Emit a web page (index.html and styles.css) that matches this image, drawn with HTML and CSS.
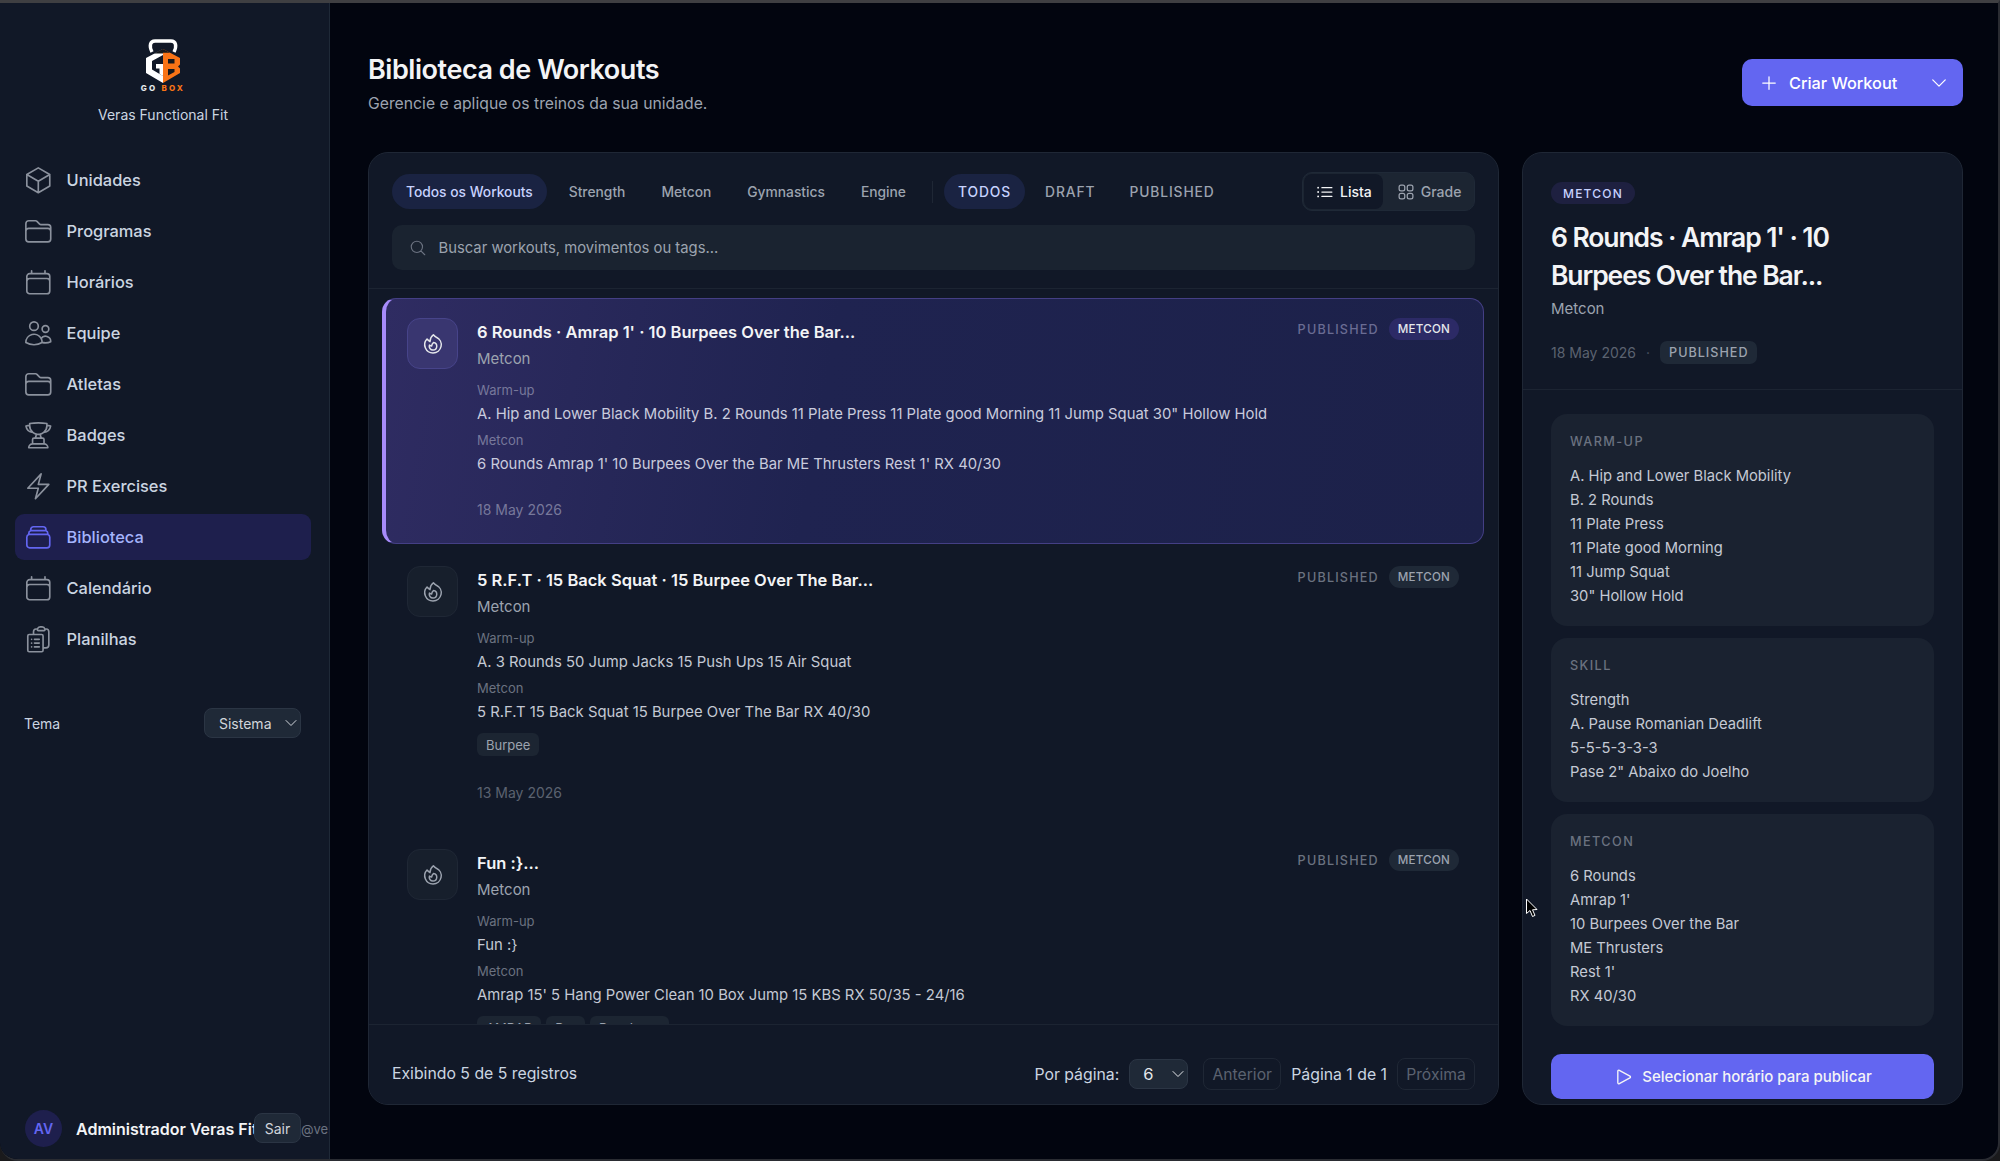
FILE: index.html
```html
<!DOCTYPE html>
<html lang="pt-BR">
<head>
<meta charset="utf-8">
<title>Biblioteca de Workouts</title>
<link rel="stylesheet" href="styles.css">
</head>
<body>
<svg class="sprite" aria-hidden="true">
  <defs>
    <symbol id="i-cube" viewBox="0 0 24 24"><path d="m21 7.5-9-5.25L3 7.5m18 0-9 5.25m9-5.25v9l-9 5.25M3 7.5l9 5.25M3 7.5v9l9 5.25m0-9v9"/></symbol>
    <symbol id="i-folder" viewBox="0 0 24 24"><path d="M2.25 12.75V12A2.25 2.25 0 0 1 4.5 9.75h15A2.25 2.25 0 0 1 21.75 12v.75m-8.69-6.44-2.12-2.12a1.5 1.5 0 0 0-1.061-.44H4.5A2.25 2.25 0 0 0 2.25 6v12a2.25 2.25 0 0 0 2.25 2.25h15A2.25 2.25 0 0 0 21.75 18V9a2.25 2.25 0 0 0-2.25-2.25h-5.379a1.5 1.5 0 0 1-1.06-.44Z"/></symbol>
    <symbol id="i-calendar" viewBox="0 0 24 24"><path d="M6.75 3v2.25M17.25 3v2.25M3 18.75V7.5a2.25 2.25 0 0 1 2.25-2.25h13.5A2.25 2.25 0 0 1 21 7.5v11.25m-18 0A2.25 2.25 0 0 0 5.25 21h13.5A2.25 2.25 0 0 0 21 18.75m-18 0v-7.5A2.25 2.25 0 0 1 5.25 9h13.5A2.25 2.25 0 0 1 21 11.25v7.5"/></symbol>
    <symbol id="i-users" viewBox="0 0 24 24"><path d="M15 19.128a9.38 9.38 0 0 0 2.625.372 9.337 9.337 0 0 0 4.121-.952 4.125 4.125 0 0 0-7.533-2.493M15 19.128v-.003c0-1.113-.285-2.16-.786-3.07M15 19.128v.106A12.318 12.318 0 0 1 8.624 21c-2.331 0-4.512-.645-6.374-1.766l-.001-.109a6.375 6.375 0 0 1 11.964-3.07M12 6.375a3.375 3.375 0 1 1-6.75 0 3.375 3.375 0 0 1 6.75 0Zm8.25 2.25a2.625 2.625 0 1 1-5.25 0 2.625 2.625 0 0 1 5.25 0Z"/></symbol>
    <symbol id="i-trophy" viewBox="0 0 24 24"><path d="M16.5 18.75h-9m9 0a3 3 0 0 1 3 3h-15a3 3 0 0 1 3-3m9 0v-3.375c0-.621-.503-1.125-1.125-1.125h-.871M7.5 18.75v-3.375c0-.621.504-1.125 1.125-1.125h.872m5.007 0H9.497m5.007 0a7.454 7.454 0 0 1-.982-3.172M9.497 14.25a7.454 7.454 0 0 0 .981-3.172M5.25 4.236c-.982.143-1.954.317-2.916.52A6.003 6.003 0 0 0 7.73 9.728M5.25 4.236V4.5c0 2.108.966 3.99 2.48 5.228M5.25 4.236V2.721C7.456 2.41 9.71 2.25 12 2.25c2.291 0 4.545.16 6.75.47v1.516M7.73 9.728a6.726 6.726 0 0 0 2.748 1.35m8.272-6.842V4.5c0 2.108-.966 3.99-2.48 5.228m2.48-5.492a46.32 46.32 0 0 1 2.916.52 6.003 6.003 0 0 1-5.395 4.972m0 0a6.726 6.726 0 0 1-2.749 1.35m0 0a6.772 6.772 0 0 1-3.044 0"/></symbol>
    <symbol id="i-bolt" viewBox="0 0 24 24"><path d="m3.75 13.5 10.5-11.25L12 10.5h8.25L9.75 21.75 12 13.5H3.75Z"/></symbol>
    <symbol id="i-stack" viewBox="0 0 24 24"><path d="M6 6.878V6a2.25 2.25 0 0 1 2.25-2.25h7.5A2.25 2.25 0 0 1 18 6v.878m-12 0c.235-.083.487-.128.75-.128h10.5c.263 0 .515.045.75.128m-12 0A2.25 2.25 0 0 0 4.5 9v.878m13.5-3A2.25 2.25 0 0 1 19.5 9v.878m0 0a2.246 2.246 0 0 0-.75-.128H5.25c-.263 0-.515.045-.75.128m15 0A2.25 2.25 0 0 1 21 12v6a2.25 2.25 0 0 1-2.25 2.25H5.25A2.25 2.25 0 0 1 3 18v-6c0-.98.626-1.813 1.5-2.122"/></symbol>
    <symbol id="i-clipboard" viewBox="0 0 24 24"><path d="M9 12h3.75M9 15h3.75M9 18h3.75m3 .75H18a2.25 2.25 0 0 0 2.25-2.25V6.108c0-1.135-.845-2.098-1.976-2.192a48.424 48.424 0 0 0-1.123-.08m-5.801 0c-.065.21-.1.433-.1.664 0 .414.336.75.75.75h4.5a.75.75 0 0 0 .75-.75 2.25 2.25 0 0 0-.1-.664m-5.8 0A2.251 2.251 0 0 1 13.5 2.25H15c1.012 0 1.867.668 2.15 1.586m-5.8 0c-.376.023-.75.05-1.124.08C9.095 4.01 8.25 4.973 8.25 6.108V8.25m0 0H4.875c-.621 0-1.125.504-1.125 1.125v11.25c0 .621.504 1.125 1.125 1.125h9.75c.621 0 1.125-.504 1.125-1.125V9.375c0-.621-.504-1.125-1.125-1.125H8.25ZM6.75 12h.008v.008H6.75V12Zm0 3h.008v.008H6.75V15Zm0 3h.008v.008H6.75V18Z"/></symbol>
    <symbol id="i-fire" viewBox="0 0 24 24"><path d="M15.362 5.214A8.252 8.252 0 0 1 12 21 8.25 8.25 0 0 1 6.038 7.047 8.287 8.287 0 0 0 9 9.601a8.983 8.983 0 0 1 3.361-6.867 8.21 8.21 0 0 0 3 2.48Z"/><path d="M12 18a3.75 3.75 0 0 0 .495-7.468 5.99 5.99 0 0 0-1.925 3.547 5.975 5.975 0 0 1-2.133-1.001A3.75 3.75 0 0 0 12 18Z"/></symbol>
    <symbol id="i-list" viewBox="0 0 24 24"><path d="M8.25 6.75h12M8.25 12h12m-12 5.25h12M3.75 6.75h.007v.008H3.75V6.75Zm.375 0a.375.375 0 1 1-.75 0 .375.375 0 0 1 .75 0ZM3.75 12h.007v.008H3.75V12Zm.375 0a.375.375 0 1 1-.75 0 .375.375 0 0 1 .75 0Zm-.375 5.25h.007v.008H3.75v-.008Zm.375 0a.375.375 0 1 1-.75 0 .375.375 0 0 1 .75 0Z"/></symbol>
    <symbol id="i-grid" viewBox="0 0 24 24"><path d="M3.75 6A2.25 2.25 0 0 1 6 3.75h2.25A2.25 2.25 0 0 1 10.5 6v2.25a2.25 2.25 0 0 1-2.25 2.25H6a2.25 2.25 0 0 1-2.25-2.25V6ZM3.75 15.75A2.25 2.25 0 0 1 6 13.5h2.25a2.25 2.25 0 0 1 2.25 2.25V18a2.25 2.25 0 0 1-2.25 2.25H6A2.25 2.25 0 0 1 3.75 18v-2.25ZM13.5 6a2.25 2.25 0 0 1 2.25-2.25H18A2.25 2.25 0 0 1 20.25 6v2.25A2.25 2.25 0 0 1 18 10.5h-2.25a2.25 2.25 0 0 1-2.25-2.25V6ZM13.5 15.75a2.25 2.25 0 0 1 2.25-2.25H18a2.25 2.25 0 0 1 2.25 2.25V18A2.25 2.25 0 0 1 18 20.25h-2.25A2.25 2.25 0 0 1 13.5 18v-2.25Z"/></symbol>
    <symbol id="i-search" viewBox="0 0 24 24"><path d="m21 21-5.197-5.197m0 0A7.5 7.5 0 1 0 5.196 5.196a7.5 7.5 0 0 0 10.607 10.607Z"/></symbol>
    <symbol id="i-plus" viewBox="0 0 24 24"><path d="M12 4.5v15m7.5-7.5h-15"/></symbol>
    <symbol id="i-chevron" viewBox="0 0 24 24"><path d="m19.5 8.25-7.5 7.5-7.5-7.5"/></symbol>
    <symbol id="i-play" viewBox="0 0 24 24"><path d="M5.25 5.653c0-.856.917-1.398 1.667-.986l11.54 6.347a1.125 1.125 0 0 1 0 1.972l-11.54 6.347a1.125 1.125 0 0 1-1.667-.986V5.653Z"/></symbol>
  </defs>
</svg>

<div class="window">
  <aside class="sidebar">
    <div class="brand">
      <svg class="logo" viewBox="0 0 44 46" aria-hidden="true">
        <path class="logo-handle" d="M11 14 C8 8 9 3 14 3 H30 C35 3 36 8 33 14"/>
        <path class="logo-white" d="M22 11 L5 20 V35 L22 45 V38 L11 31.5 V23 L22 17Z"/>
        <path class="logo-white" d="M15 26 H22 V38 L18.5 36 V30.5 H15Z"/>
        <path class="logo-dark" d="M22 11 L13 15.5 H31Z"/>
        <path class="logo-orange" d="M22 11 L39 20 V26.5 L37 28.5 L39 30.5 V35 L22 45Z"/>
        <path class="logo-dark" d="M22 11 L15 14.7 H29Z"/>
        <path class="logo-dark" d="M27 21 H33.5 V25.5 H27Z M27 31 H33.5 V34 L27 37.5Z"/>
      </svg>
      <div class="logo-word">GO <span class="logo-word-accent">BOX</span></div>
      <div class="brand-name">Veras Functional Fit</div>
    </div>
    <nav class="nav">
      <a class="nav-item"><svg class="icon nav-icon"><use href="#i-cube"/></svg>Unidades</a>
      <a class="nav-item"><svg class="icon nav-icon"><use href="#i-folder"/></svg>Programas</a>
      <a class="nav-item"><svg class="icon nav-icon"><use href="#i-calendar"/></svg>Horários</a>
      <a class="nav-item"><svg class="icon nav-icon"><use href="#i-users"/></svg>Equipe</a>
      <a class="nav-item"><svg class="icon nav-icon"><use href="#i-folder"/></svg>Atletas</a>
      <a class="nav-item"><svg class="icon nav-icon"><use href="#i-trophy"/></svg>Badges</a>
      <a class="nav-item"><svg class="icon nav-icon"><use href="#i-bolt"/></svg>PR Exercises</a>
      <a class="nav-item is-active"><svg class="icon nav-icon"><use href="#i-stack"/></svg>Biblioteca</a>
      <a class="nav-item"><svg class="icon nav-icon"><use href="#i-calendar"/></svg>Calendário</a>
      <a class="nav-item"><svg class="icon nav-icon"><use href="#i-clipboard"/></svg>Planilhas</a>
    </nav>
    <div class="theme-row">
      <span class="theme-label">Tema</span>
      <div class="theme-select"><span>Sistema</span><svg class="icon select-chevron"><use href="#i-chevron"/></svg></div>
    </div>
    <div class="user-row">
      <div class="avatar">AV</div>
      <span class="user-name">Administrador Veras Fit</span>
      <span class="user-handle">@veras</span>
      <button class="logout">Sair</button>
    </div>
  </aside>

  <main class="main">
    <header class="page-head">
      <div>
        <h1 class="page-title">Biblioteca de Workouts</h1>
        <p class="page-sub">Gerencie e aplique os treinos da sua unidade.</p>
      </div>
      <button class="btn-create">
        <svg class="icon"><use href="#i-plus"/></svg>
        <span class="btn-create-label">Criar Workout</span>
        <svg class="icon"><use href="#i-chevron"/></svg>
      </button>
    </header>

    <div class="columns">
      <section class="panel list-panel">
        <div class="toolbar">
          <div class="filters">
            <span class="pill is-on">Todos os Workouts</span>
            <span class="pill">Strength</span>
            <span class="pill">Metcon</span>
            <span class="pill">Gymnastics</span>
            <span class="pill">Engine</span>
            <span class="filter-sep"></span>
            <span class="pill pill-status is-on">TODOS</span>
            <span class="pill pill-status">DRAFT</span>
            <span class="pill pill-status">PUBLISHED</span>
            <div class="view-toggle">
              <span class="view-opt is-on"><svg class="icon"><use href="#i-list"/></svg>Lista</span>
              <span class="view-opt"><svg class="icon"><use href="#i-grid"/></svg>Grade</span>
            </div>
          </div>
          <div class="search">
            <svg class="icon search-icon"><use href="#i-search"/></svg>
            <span>Buscar workouts, movimentos ou tags...</span>
          </div>
        </div>

        <div class="list">
          <article class="card is-selected">
            <div class="card-icon"><svg class="icon fire-icon"><use href="#i-fire"/></svg></div>
            <div class="card-body">
              <h3 class="card-title">6 Rounds · Amrap 1' · 10 Burpees Over the Bar...</h3>
              <div class="card-sub">Metcon</div>
              <div class="card-label">Warm-up</div>
              <div class="card-line">A. Hip and Lower Black Mobility B. 2 Rounds 11 Plate Press 11 Plate good Morning 11 Jump Squat 30" Hollow Hold</div>
              <div class="card-label">Metcon</div>
              <div class="card-line">6 Rounds Amrap 1' 10 Burpees Over the Bar ME Thrusters Rest 1' RX 40/30</div>
              <div class="card-date">18 May 2026</div>
            </div>
            <div class="card-meta"><span class="card-status">PUBLISHED</span><span class="card-badge">METCON</span></div>
          </article>

          <article class="card">
            <div class="card-icon"><svg class="icon fire-icon"><use href="#i-fire"/></svg></div>
            <div class="card-body">
              <h3 class="card-title">5 R.F.T · 15 Back Squat · 15 Burpee Over The Bar...</h3>
              <div class="card-sub">Metcon</div>
              <div class="card-label">Warm-up</div>
              <div class="card-line">A. 3 Rounds 50 Jump Jacks 15 Push Ups 15 Air Squat</div>
              <div class="card-label">Metcon</div>
              <div class="card-line">5 R.F.T 15 Back Squat 15 Burpee Over The Bar RX 40/30</div>
              <div class="tags"><span class="tag">Burpee</span></div>
              <div class="card-date">13 May 2026</div>
            </div>
            <div class="card-meta"><span class="card-status">PUBLISHED</span><span class="card-badge">METCON</span></div>
          </article>

          <article class="card">
            <div class="card-icon"><svg class="icon fire-icon"><use href="#i-fire"/></svg></div>
            <div class="card-body">
              <h3 class="card-title">Fun :}...</h3>
              <div class="card-sub">Metcon</div>
              <div class="card-label">Warm-up</div>
              <div class="card-line">Fun :}</div>
              <div class="card-label">Metcon</div>
              <div class="card-line">Amrap 15' 5 Hang Power Clean 10 Box Jump 15 KBS RX 50/35 - 24/16</div>
              <div class="tags"><span class="tag">AMRAP</span><span class="tag">Bar</span><span class="tag">Box Jump</span></div>
            </div>
            <div class="card-meta"><span class="card-status">PUBLISHED</span><span class="card-badge">METCON</span></div>
          </article>
        </div>

        <footer class="list-foot">
          <span class="foot-count">Exibindo 5 de 5 registros</span>
          <div class="pager">
            <span class="pager-label">Por página:</span>
            <div class="pager-select"><span>6</span><svg class="icon select-chevron"><use href="#i-chevron"/></svg></div>
            <button class="pager-btn">Anterior</button>
            <span class="pager-page">Página 1 de 1</span>
            <button class="pager-btn">Próxima</button>
          </div>
        </footer>
      </section>

      <aside class="panel detail-panel">
        <div class="detail-head">
          <span class="detail-badge">METCON</span>
          <h2 class="detail-title">6 Rounds · Amrap 1' · 10 Burpees Over the Bar...</h2>
          <div class="detail-sub">Metcon</div>
          <div class="detail-meta">
            <span class="detail-date">18 May 2026</span>
            <span class="detail-dot">·</span>
            <span class="detail-status">PUBLISHED</span>
          </div>
        </div>
        <div class="detail-body">
          <div class="block">
            <div class="block-label">WARM-UP</div>
            <div class="block-line">A. Hip and Lower Black Mobility</div>
            <div class="block-line">B. 2 Rounds</div>
            <div class="block-line">11 Plate Press</div>
            <div class="block-line">11 Plate good Morning</div>
            <div class="block-line">11 Jump Squat</div>
            <div class="block-line">30" Hollow Hold</div>
          </div>
          <div class="block">
            <div class="block-label">SKILL</div>
            <div class="block-line">Strength</div>
            <div class="block-line">A. Pause Romanian Deadlift</div>
            <div class="block-line">5-5-5-3-3-3</div>
            <div class="block-line">Pase 2" Abaixo do Joelho</div>
          </div>
          <div class="block">
            <div class="block-label">METCON</div>
            <div class="block-line">6 Rounds</div>
            <div class="block-line">Amrap 1'</div>
            <div class="block-line">10 Burpees Over the Bar</div>
            <div class="block-line">ME Thrusters</div>
            <div class="block-line">Rest 1'</div>
            <div class="block-line">RX 40/30</div>
          </div>
        </div>
        <div class="detail-foot">
          <button class="btn-publish"><svg class="icon btn-publish-icon"><use href="#i-play"/></svg>Selecionar horário para publicar</button>
        </div>
      </aside>
    </div>
  </main>

  <svg class="cursor" viewBox="0 0 14 20" aria-hidden="true"><path d="M1.5 1 V15.5 L5 12.5 L7.5 18.5 L10 17.4 L7.5 11.8 L12 11.5 Z"/></svg>
</div>
</body>
</html>
```

FILE: styles.css
```css
* { box-sizing: border-box; }
html, body { margin: 0; height: 100%; }
body {
  background: #1a1a1c;
  color: #e5e7eb;
  font-family: Inter, "Noto Sans", sans-serif;
  overflow: hidden;
}
h1, h2, h3, p { margin: 0; }
button { font-family: inherit; border: 0; cursor: pointer; }
.sprite { display: none; }

.icon {
  display: block;
  width: 20px;
  height: 20px;
  fill: none;
  stroke: currentColor;
  stroke-width: 1.5;
  stroke-linecap: round;
  stroke-linejoin: round;
  flex: none;
}

.window {
  position: relative;
  display: flex;
  height: 1161px;
  width: 2000px;
  border-top: 3px solid #3f3f42;
  border-right: 2px solid #2a2c32;
  border-bottom: 2px solid #2a2c32;
  border-radius: 0 0 18px 18px;
  background: #02050f;
  overflow: hidden;
}

/* Sidebar */
.sidebar {
  width: 330px;
  flex: none;
  display: flex;
  flex-direction: column;
  background: #111827;
  border-right: 1px solid #1f2937;
}
.brand {
  display: flex;
  flex-direction: column;
  align-items: center;
  padding: 35px 3px 0 0;
}
.logo { width: 44px; height: 46px; display: block; }
.logo-handle { fill: none; stroke: #fff; stroke-width: 3.4; }
.logo-white { fill: #fff; }
.logo-orange { fill: #f97316; }
.logo-dark { fill: #16181d; }
.logo-word {
  font-size: 8px;
  font-weight: 800;
  letter-spacing: 2.2px;
  line-height: 10px;
  margin-top: -1px;
  color: #e5e7eb;
  white-space: pre;
}
.logo-word-accent { color: #f97316; }
.brand-name {
  font-size: 14px;
  line-height: 20px;
  margin-top: 12px;
  color: #cbd5e1;
}

.nav {
  display: flex;
  flex-direction: column;
  gap: 5px;
  padding: 0 18px 0 15px;
  margin-top: 32px;
}
.nav-item {
  display: flex;
  align-items: center;
  gap: 13px;
  height: 46px;
  padding-left: 8px;
  border-radius: 9px;
  font-size: 16.4px;
  font-weight: 500;
  color: #cbd5e1;
}
.nav-icon { width: 30.6px; height: 30.6px; color: #8b919d; stroke-width: 1.3; }
.nav-item.is-active { background: #1e1f4d; color: #a5b4fc; }
.nav-item.is-active .nav-icon { color: #6366f1; }

.theme-row {
  display: flex;
  align-items: center;
  justify-content: space-between;
  padding: 0 28px 0 24px;
  margin-top: 46px;
}
.theme-label { font-size: 14px; color: #cbd5e1; }
.theme-select {
  display: flex;
  align-items: center;
  justify-content: space-between;
  width: 97px;
  height: 30px;
  padding: 0 1px 0 14px;
  background: #1f2937;
  border: 1px solid #2b3544;
  border-radius: 8px;
  font-size: 14px;
  color: #d1d5db;
}
.select-chevron { width: 16px; height: 16px; }

.user-row {
  position: relative;
  margin-top: auto;
  display: flex;
  align-items: center;
  gap: 14px;
  height: 37px;
  margin-bottom: 12px;
  padding-left: 25px;
  overflow: hidden;
  white-space: nowrap;
}
.avatar {
  width: 37px;
  height: 37px;
  border-radius: 50%;
  flex: none;
  display: flex;
  align-items: center;
  justify-content: center;
  background: #1e1f4d;
  color: #6366f1;
  font-size: 14px;
  font-weight: 600;
}
.user-name { font-size: 16px; font-weight: 600; color: #f3f4f6; }
.user-handle { font-size: 13px; color: #6b7280; position: absolute; left: 301px; }
.logout {
  position: absolute;
  left: 254px;
  top: 3px;
  width: 47px;
  height: 30px;
  background: #1f2937;
  border: 1px solid #2b3544;
  border-radius: 8px;
  color: #d1d5db;
  font-size: 14px;
}

/* Main */
.main {
  flex: 1;
  min-width: 0;
  display: flex;
  flex-direction: column;
  padding: 0 35px 54px 38px;
}
.page-head {
  height: 149px;
  flex: none;
  display: flex;
  justify-content: space-between;
  align-items: flex-start;
  padding-top: 56px;
}
.page-title { font-size: 27px; font-weight: 600; line-height: 24px; margin-top: -1px; color: #f3f4f6; letter-spacing: -0.45px; }
.page-sub { font-size: 15.75px; line-height: 22px; margin-top: 11px; color: #9ca3af; }
.btn-create {
  display: flex;
  align-items: center;
  gap: 10px;
  width: 221px;
  height: 47px;
  padding: 0 14px 0 17px;
  background: #6366f1;
  color: #fff;
  border-radius: 10px;
  font-size: 16.3px;
  font-weight: 500;
}
.btn-create-label { flex: 1; text-align: left; }

.columns { flex: 1; min-height: 0; display: flex; gap: 23px; }
.panel {
  background: #111827;
  border: 1px solid #1f2735;
  border-radius: 20px;
  overflow: hidden;
  display: flex;
  flex-direction: column;
}
.list-panel { width: 1131px; flex: none; }
.detail-panel { flex: 1; min-width: 0; }

/* Toolbar */
.toolbar { padding: 19px 23px 18px; border-bottom: 1px solid #1c2432; flex: none; }
.filters { display: flex; align-items: center; gap: 8px; height: 39px; }
.pill {
  display: flex;
  align-items: center;
  height: 35px;
  padding: 0 14px;
  border-radius: 18px;
  font-size: 13.8px;
  font-weight: 500;
  color: #9ca3af;
  white-space: nowrap;
}
.pill.is-on { background: #1a2342; color: #c7d2fe; }
.pill-status { letter-spacing: 0.9px; }
.pill-status + .pill-status { margin-left: -2px; }
.filter-sep { width: 1px; height: 22px; background: #1f2735; margin: 0 3px 0 4px; }
.view-toggle {
  margin-left: auto;
  width: 173px;
  height: 39px;
  display: flex;
  align-items: center;
  padding: 1px;
  border-radius: 10px;
  background: #1c2532;
  border: 1px solid #1f2937;
}
.view-opt {
  display: flex;
  align-items: center;
  gap: 5px;
  height: 35px;
  padding: 0 11px;
  border-radius: 8px;
  font-size: 14px;
  font-weight: 500;
  color: #9ca3af;
}
.view-opt.is-on { background: #111827; color: #f3f4f6; margin-right: 2px; }
.search {
  display: flex;
  align-items: center;
  gap: 12px;
  height: 45px;
  margin-top: 14px;
  padding-left: 16.5px;
  background: #1a2330;
  border-radius: 10px;
  font-size: 14.8px;
  color: #9ca3af;
}
.search-icon { width: 18px; height: 18px; color: #6b7280; }

/* List */
.list {
  flex: 1;
  min-height: 0;
  overflow: hidden;
  display: flex;
  flex-direction: column;
  gap: 2px;
  padding: 9px 14px 0 13px;
}
.card {
  display: flex;
  flex: none;
  align-items: flex-start;
  border: 1px solid transparent;
  border-left-width: 4px;
  border-radius: 14px;
  padding: 19px 24px 23px 21px;
}
.card.is-selected {
  background: linear-gradient(100deg, #2f2c62 0%, #1f2350 40%, #1c2149 100%);
  border-color: #443f85;
  border-left-color: #a78bfa;
}
.card-icon {
  width: 51px;
  height: 51px;
  flex: none;
  display: flex;
  align-items: center;
  justify-content: center;
  border: 1px solid #1f2735;
  border-radius: 13px;
  background: #171f2c;
  color: #9ca3af;
}
.fire-icon { width: 24px; height: 24px; }
.is-selected .card-icon { background: #393670; border-color: #47448a; color: #e5e7eb; }
.card-body { flex: 1; min-width: 0; margin-left: 19px; }
.card-title { font-size: 16.5px; font-weight: 600; line-height: 28px; color: #f3f4f6; }
.card-sub { font-size: 15px; line-height: 22px; margin: 2px 0 11px; color: #9ca3af; }
.card-label { font-size: 13px; line-height: 18px; color: #6b7280; }
.card-line { font-size: 14.85px; line-height: 24px; margin: 3px 0 5px; color: #c4c9d4; }
.is-selected .card-line { color: #c9cbdd; }
.is-selected .card-label, .is-selected .card-date { color: #77789b; }
.card-date { font-size: 14px; line-height: 20px; margin-top: 24px; color: #5b6270; }
.tags { display: flex; gap: 5px; margin-top: 9px; }
.tags + .card-date { margin-top: 27px; }
.tag {
  height: 23px;
  padding: 0 9px;
  display: flex;
  align-items: center;
  background: #1c2532;
  border-radius: 6px;
  font-size: 13px;
  color: #9ca3af;
}
.card-meta { display: flex; align-items: center; gap: 10px; flex: none; height: 22px; }
.card-status { font-size: 12.6px; font-weight: 500; letter-spacing: 1.2px; color: #6b7280; }
.card-badge {
  height: 22px;
  padding: 0 9px;
  display: flex;
  align-items: center;
  border-radius: 11px;
  background: #1f2937;
  color: #9ca3af;
  font-size: 11.6px;
  font-weight: 500;
  letter-spacing: 0.2px;
}
.is-selected .card-badge { background: #2c2a66; color: #e5e7eb; }
.is-selected .card-status { color: #6a6c93; }

/* Footer */
.list-foot {
  height: 80px;
  flex: none;
  display: flex;
  align-items: flex-end;
  justify-content: space-between;
  padding: 0 23px 14px;
  border-top: 1px solid #1c2432;
  background: #111827;
  font-size: 15.8px;
  color: #cbd5e1;
}
.foot-count { line-height: 32px; }
.pager { display: flex; align-items: center; height: 32px; }
.pager-label { margin-right: 10px; }
.pager-select {
  display: flex;
  align-items: center;
  justify-content: space-between;
  width: 59px;
  height: 30px;
  padding: 0 1px 0 13px;
  background: #1f2937;
  border: 1px solid #2b3544;
  border-radius: 8px;
  color: #e5e7eb;
  font-size: 16.5px;
}
.pager-btn {
  height: 32px;
  width: 78px;
  background: transparent;
  border: 1px solid #1f2735;
  border-radius: 8px;
  font-size: 15.7px;
  color: #5b6270;
  padding: 0;
}
.pager-select + .pager-btn { margin-left: 15px; }
.pager-page { margin: 0 10px; }

/* Detail */
.detail-head { padding: 29px 28px 25px; border-bottom: 1px solid #1c2432; flex: none; }
.detail-badge {
  display: inline-flex;
  align-items: center;
  height: 22px;
  padding: 0 12px;
  border-radius: 11px;
  background: #1e2040;
  color: #c7d2fe;
  font-size: 12px;
  font-weight: 500;
  letter-spacing: 1.2px;
  vertical-align: top;
}
.detail-title {
  font-size: 26.5px;
  line-height: 38px;
  font-weight: 600;
  letter-spacing: -1.1px;
  margin-top: 14px;
  color: #f3f4f6;
  max-width: 300px;
}
.detail-sub { font-size: 15px; line-height: 22px; margin-top: 4px; color: #9ca3af; }
.detail-meta { display: flex; align-items: center; margin-top: 21px; }
.detail-date { font-size: 14px; color: #5b6270; }
.detail-dot { margin: 0 10px; color: #4b5563; font-size: 14px; }
.detail-status {
  height: 23px;
  padding: 0 9px;
  display: flex;
  align-items: center;
  border-radius: 7px;
  background: #1f2937;
  color: #9ca3af;
  font-size: 12.6px;
  font-weight: 500;
  letter-spacing: 1px;
}
.detail-body { flex: 1; min-height: 0; overflow: hidden; padding: 24px 28px 0; display: flex; flex-direction: column; gap: 12px; }
.block { background: #1a2230; border-radius: 16px; padding: 18px 19px 18px; flex: none; }
.block-label { font-size: 12.7px; line-height: 20px; font-weight: 500; letter-spacing: 1.4px; color: #6b7280; margin-bottom: 12px; }
.block-line { font-size: 14.75px; line-height: 24px; color: #c4c9d4; }
.detail-foot { padding: 0 28px 5px; flex: none; }
.btn-publish {
  width: 100%;
  height: 45px;
  display: flex;
  align-items: center;
  justify-content: center;
  gap: 7px;
  background: #6366f1;
  color: #f3f4f6;
  border-radius: 10px;
  font-size: 15px;
  font-weight: 500;
}
.btn-publish-icon { width: 22px; height: 22px; }

.cursor {
  position: absolute;
  left: 1525px;
  top: 895px;
  width: 14px;
  height: 20px;
  fill: #000;
  stroke: #fff;
  stroke-width: 1;
}
```
